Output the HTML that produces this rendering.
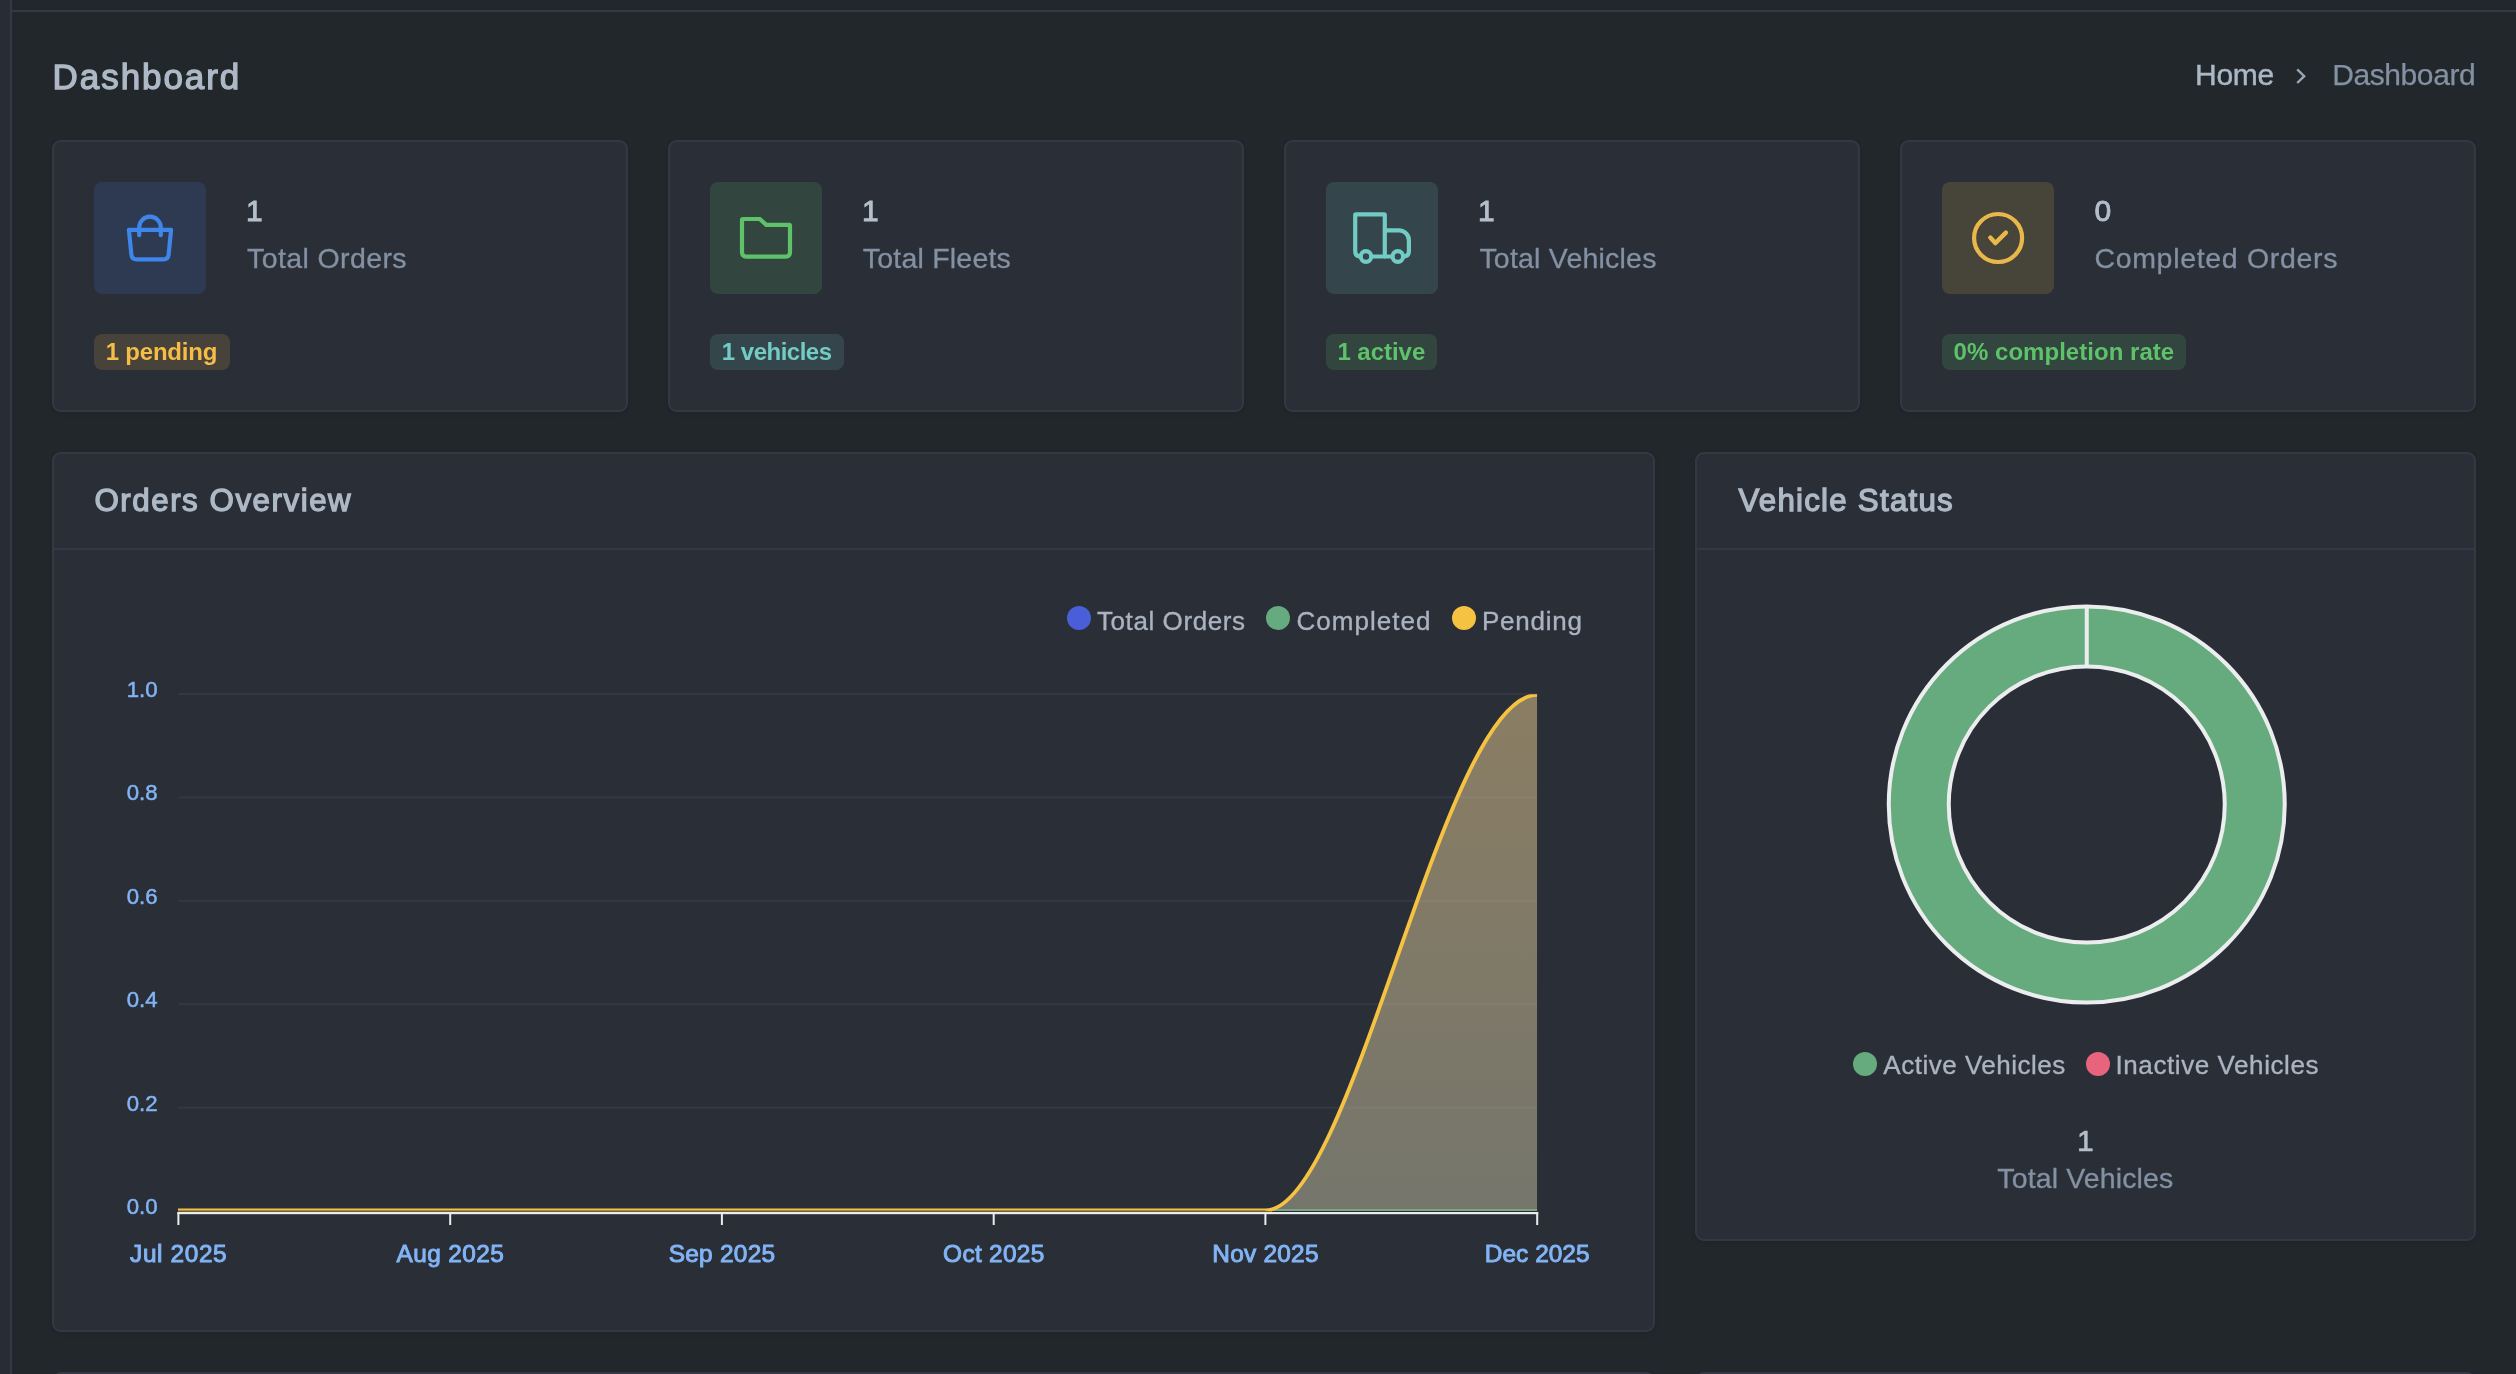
<!DOCTYPE html>
<html lang="en">
<head>
<meta charset="utf-8">
<title>Dashboard</title>
<style>
*{box-sizing:border-box;margin:0;padding:0}
html,body{width:2516px;height:1374px;overflow:hidden;background:#22272b}
body{position:relative;font-family:"Liberation Sans",sans-serif;color:#aab8c5;-webkit-font-smoothing:antialiased}
.abs{position:absolute}
.sidebar{left:0;top:0;width:12px;height:1374px;background:#282c35;border-right:2px solid #323946}
.topline{left:12px;top:10px;width:2504px;height:2px;background:#323946}
.card{position:absolute;background:#2a2e37;border:2px solid #323945;border-radius:9px;box-shadow:0 2px 5px rgba(0,0,0,.08)}
.title{left:53px;top:56.1px;font-size:35px;line-height:42px;font-weight:400;color:#aeb9c6;-webkit-text-stroke:1.3px #aeb9c6;white-space:nowrap}
.crumb{top:58px;font-size:30px;line-height:34px;white-space:nowrap}
.ibox{position:absolute;left:40px;top:40px;width:112px;height:112px;border-radius:8px}
.ibox svg{position:absolute;left:0;top:0;width:112px;height:112px;fill:none;stroke-width:4.2;stroke-linecap:round;stroke-linejoin:round}
.num{position:absolute;left:193px;top:50.7px;font-size:30px;line-height:36px;color:#b4bfcb;white-space:nowrap;-webkit-text-stroke:0.9px #b4bfcb}
.lbl{position:absolute;left:193px;top:99px;font-size:28.5px;line-height:34px;color:#8391a2;white-space:nowrap;-webkit-text-stroke:0.3px #8391a2}
.badge{position:absolute;left:40px;top:192px;height:36px;border-radius:8px;font-size:24px;line-height:36px;font-weight:700;text-align:left;white-space:nowrap}
.badge span{display:inline-block}
.chead{position:absolute;left:0;top:0;right:0;height:96px;border-bottom:2px solid #323945}
.chead span{position:absolute;left:40px;display:inline-block;top:26.5px;font-size:31.3px;line-height:40px;font-weight:400;color:#aeb9c6;-webkit-text-stroke:1.3px #aeb9c6;white-space:nowrap}
svg text{font-family:"Liberation Sans",sans-serif}
/*FIT*/
#t-title{letter-spacing:1.93px;margin-left:-0.40px}
#t-home{letter-spacing:-0.24px;margin-left:-1.00px}
#t-crumb{letter-spacing:-0.41px;margin-left:-1.80px}
#t-num1{letter-spacing:0.00px;margin-left:-1.00px}
#t-num2{letter-spacing:0.00px;margin-left:-1.00px}
#t-num3{letter-spacing:0.00px;margin-left:-1.00px}
#t-num4{letter-spacing:0.00px;margin-left:-0.60px}
#t-lbl1{letter-spacing:0.39px;margin-left:0.00px}
#t-lbl2{letter-spacing:0.21px;margin-left:-0.20px}
#t-lbl3{letter-spacing:0.21px;margin-left:0.40px}
#t-lbl4{letter-spacing:0.68px;margin-left:-0.60px}
#t-badge1{letter-spacing:-0.23px;margin-left:11.80px}
#t-badge2{letter-spacing:-0.50px;margin-left:11.80px}
#t-badge3{letter-spacing:-0.03px;margin-left:11.40px}
#t-badge4{letter-spacing:0.03px;margin-left:11.60px}
#t-oo{letter-spacing:1.54px;margin-left:0.40px}
#t-vs{letter-spacing:1.23px;margin-left:1.40px}
/*ENDFIT*/
</style>
</head>
<body>
<div id="wrap" style="position:absolute;left:0;top:0;width:2516px;height:1374px;will-change:transform">
<div class="abs sidebar"></div>
<div class="abs topline"></div>

<div class="abs title" id="t-title">Dashboard</div>
<div class="abs crumb" id="t-home" style="left:2196px;color:#aab8c5;-webkit-text-stroke:0.45px #aab8c5">Home</div>
<svg class="abs" style="left:2292px;top:66px" width="20" height="20" viewBox="0 0 20 20" fill="none" stroke="#9aa6b4" stroke-width="2.4" stroke-linecap="butt" stroke-linejoin="miter"><path d="M5.2 3.4 L12.2 10.2 L5.2 17"/></svg>
<div class="abs crumb" id="t-crumb" style="left:2334px;color:#8391a2;-webkit-text-stroke:0.25px #8391a2">Dashboard</div>

<!-- stat cards -->
<div class="card" style="left:52px;top:140px;width:576px;height:272px">
  <div class="ibox" style="background:#2d3a52"><svg viewBox="0 0 112 112" stroke="#3f86ea"><path d="M34.9 47.9H77.1L74.6 72.6Q74.1 77.3 69.4 77.3H42.6Q37.9 77.3 37.4 72.6Z"/><path d="M45.2 53.2V45.5A10.8 10.8 0 0 1 66.8 45.5V53.2"/></svg></div>
  <div class="num" id="t-num1">1</div><div class="lbl" id="t-lbl1">Total Orders</div>
  <div class="badge" style="width:136px;background:#48433a;color:#f5bd47"><span id="t-badge1">1 pending</span></div>
</div>
<div class="card" style="left:668px;top:140px;width:576px;height:272px">
  <div class="ibox" style="background:#32453e"><svg viewBox="0 0 112 112" stroke="#5ec26a"><path stroke-linejoin="miter" d="M33 37H49.8L56.2 42.8H79.2Q80 42.8 80 43.6V69.9Q80 74.7 75.2 74.7H36.8Q32 74.7 32 69.9V38Q32 37 33 37Z"/></svg></div>
  <div class="num" id="t-num2">1</div><div class="lbl" id="t-lbl2">Total Fleets</div>
  <div class="badge" style="width:134px;background:#34464b;color:#72cbc4"><span id="t-badge2">1 vehicles</span></div>
</div>
<div class="card" style="left:1284px;top:140px;width:576px;height:272px">
  <div class="ibox" style="background:#34464b"><svg viewBox="0 0 112 112" stroke="#72cbc4"><path d="M34.6 74.5Q29.2 74.5 29.2 69V33Q29.2 32.3 29.9 32.3H58.1Q58.8 32.3 58.8 33V74.5"/><path d="M45.3 74.5H66.5"/><path d="M58.8 48.4H72.9A10 10 0 0 1 82.9 58.4V69Q82.9 74.5 77.1 74.5"/><circle cx="39.95" cy="74.5" r="5.3"/><circle cx="71.8" cy="74.5" r="5.3"/></svg></div>
  <div class="num" id="t-num3">1</div><div class="lbl" id="t-lbl3">Total Vehicles</div>
  <div class="badge" style="width:111px;background:#32453e;color:#5ec26a"><span id="t-badge3">1 active</span></div>
</div>
<div class="card" style="left:1900px;top:140px;width:576px;height:272px">
  <div class="ibox" style="background:#47443a"><svg viewBox="0 0 112 112" stroke="#eab84a"><circle cx="56.1" cy="56" r="24"/><path d="M48.3 55.6L53.3 61.1L63.9 50.6" stroke-width="4.4"/></svg></div>
  <div class="num" id="t-num4">0</div><div class="lbl" id="t-lbl4">Completed Orders</div>
  <div class="badge" style="width:244px;background:#32453e;color:#5ec26a"><span id="t-badge4">0% completion rate</span></div>
</div>

<!-- orders overview -->
<div class="card" style="left:52px;top:452px;width:1603px;height:880px">
  <div class="chead"><span id="t-oo">Orders Overview</span></div>
</div>

<!-- vehicle status -->
<div class="card" style="left:1695px;top:452px;width:781px;height:789px">
  <div class="chead"><span id="t-vs">Vehicle Status</span></div>
</div>

<svg class="abs" style="left:52px;top:452px" width="1603" height="880" viewBox="52 452 1603 880">
<defs><linearGradient id="ag" x1="0" y1="693" x2="0" y2="1211" gradientUnits="userSpaceOnUse"><stop offset="0" stop-color="#ebcd8f" stop-opacity="0.5"/><stop offset="1" stop-color="#c1bda1" stop-opacity="0.5"/></linearGradient>
<clipPath id="gc"><rect x="170" y="690" width="1367.2" height="522"/></clipPath><clipPath id="lc"><polygon points="170,694.3 1537.2,694.3 1537.2,1213 1284,1213 1264,1210.4 170,1210.4"/></clipPath></defs>
<circle cx="1079" cy="618" r="12" fill="#4a5fd7"/>
<text x="1097" y="630" font-size="26" fill="#aab4c0" stroke="#aab4c0" stroke-width="0.35" textLength="148" lengthAdjust="spacing">Total Orders</text>
<circle cx="1278" cy="618" r="12" fill="#66ab7f"/>
<text x="1296.5" y="630" font-size="26" fill="#aab4c0" stroke="#aab4c0" stroke-width="0.35" textLength="134" lengthAdjust="spacing">Completed</text>
<circle cx="1464" cy="618" r="12" fill="#f5c242"/>
<text x="1482" y="630" font-size="26" fill="#aab4c0" stroke="#aab4c0" stroke-width="0.35" textLength="100" lengthAdjust="spacing">Pending</text>
<rect x="178.5" y="692.9" width="1358.7" height="2" fill="#333944"/>
<rect x="178.5" y="796.4" width="1358.7" height="2" fill="#333944"/>
<rect x="178.5" y="899.8" width="1358.7" height="2" fill="#333944"/>
<rect x="178.5" y="1003.2" width="1358.7" height="2" fill="#333944"/>
<rect x="178.5" y="1106.7" width="1358.7" height="2" fill="#333944"/>
<text x="157.6" y="696.7" font-size="22.2" fill="#82b4f5" stroke="#82b4f5" stroke-width="0.5" text-anchor="end">1.0</text>
<text x="157.6" y="800.2" font-size="22.2" fill="#82b4f5" stroke="#82b4f5" stroke-width="0.5" text-anchor="end">0.8</text>
<text x="157.6" y="903.6" font-size="22.2" fill="#82b4f5" stroke="#82b4f5" stroke-width="0.5" text-anchor="end">0.6</text>
<text x="157.6" y="1007.1" font-size="22.2" fill="#82b4f5" stroke="#82b4f5" stroke-width="0.5" text-anchor="end">0.4</text>
<text x="157.6" y="1110.5" font-size="22.2" fill="#82b4f5" stroke="#82b4f5" stroke-width="0.5" text-anchor="end">0.2</text>
<text x="157.6" y="1214.0" font-size="22.2" fill="#82b4f5" stroke="#82b4f5" stroke-width="0.5" text-anchor="end">0.0</text>
<g clip-path="url(#gc)">
<path d="M1265.4 1211C1353 1211 1443 694.4 1537.2 694.4V1211Z" fill="url(#ag)"/>
<path d="M1265.4 1210H1537.2" stroke="#7db98b" stroke-width="1.6" fill="none"/>
<rect x="178" y="1210.3" width="1094" height="1.8" fill="#6e5f3c"/><path clip-path="url(#lc)" d="M178 1210.5H1265.4C1353 1210.5 1443 694.9 1537.2 694.9H1545" stroke="#f5c242" stroke-width="3.8" fill="none"/>
</g>
<rect x="177.4" y="1212" width="1360.8" height="2.2" fill="#ececec"/>
<rect x="177.4" y="1212" width="2" height="13" fill="#ececec"/>
<rect x="449.2" y="1212" width="2" height="13" fill="#ececec"/>
<rect x="720.9" y="1212" width="2" height="13" fill="#ececec"/>
<rect x="992.7" y="1212" width="2" height="13" fill="#ececec"/>
<rect x="1264.4" y="1212" width="2" height="13" fill="#ececec"/>
<rect x="1536.2" y="1212" width="2" height="13" fill="#ececec"/>
<text x="178.4" y="1262.3" font-size="24.4" fill="#82b4f5" stroke="#82b4f5" stroke-width="0.95" text-anchor="middle" textLength="96.6" lengthAdjust="spacing">Jul 2025</text>
<text x="450.2" y="1262.3" font-size="24.4" fill="#82b4f5" stroke="#82b4f5" stroke-width="0.95" text-anchor="middle" textLength="107.5" lengthAdjust="spacing">Aug 2025</text>
<text x="721.9" y="1262.3" font-size="24.4" fill="#82b4f5" stroke="#82b4f5" stroke-width="0.95" text-anchor="middle" textLength="106.4" lengthAdjust="spacing">Sep 2025</text>
<text x="993.7" y="1262.3" font-size="24.4" fill="#82b4f5" stroke="#82b4f5" stroke-width="0.95" text-anchor="middle" textLength="101.2" lengthAdjust="spacing">Oct 2025</text>
<text x="1265.4" y="1262.3" font-size="24.4" fill="#82b4f5" stroke="#82b4f5" stroke-width="0.95" text-anchor="middle" textLength="106.2" lengthAdjust="spacing">Nov 2025</text>
<text x="1537.2" y="1262.3" font-size="24.4" fill="#82b4f5" stroke="#82b4f5" stroke-width="0.95" text-anchor="middle" textLength="104.7" lengthAdjust="spacing">Dec 2025</text>
</svg>
<svg class="abs" style="left:1695px;top:452px" width="781" height="788" viewBox="1695 452 781 788">
<circle cx="2086.75" cy="804.5" r="168" fill="none" stroke="#66ab7e" stroke-width="60"/>
<circle cx="2086.75" cy="804.5" r="198" fill="none" stroke="#ecedef" stroke-width="4"/>
<circle cx="2086.75" cy="804.5" r="138" fill="none" stroke="#ecedef" stroke-width="4"/>
<rect x="2084.75" y="605" width="4" height="62" fill="#ecedef"/>
<circle cx="1865" cy="1064" r="12" fill="#66ab7e"/>
<text x="1883.3" y="1074" font-size="26" fill="#aab4c0" stroke="#aab4c0" stroke-width="0.35" textLength="182" lengthAdjust="spacing">Active Vehicles</text>
<circle cx="2098" cy="1064" r="12" fill="#e8647c"/>
<text x="2115.5" y="1074" font-size="26" fill="#aab4c0" stroke="#aab4c0" stroke-width="0.35" textLength="203" lengthAdjust="spacing">Inactive Vehicles</text>
<text x="2085.3" y="1151" font-size="30" fill="#b4bfcb" stroke="#b4bfcb" stroke-width="0.6" text-anchor="middle">1</text>
<text x="2085.3" y="1187.6" font-size="28.5" fill="#8391a2" stroke="#8391a2" stroke-width="0.3" text-anchor="middle" textLength="176" lengthAdjust="spacing">Total Vehicles</text>
</svg>
<!-- next row card (peeking) -->
<div class="card" style="left:52px;top:1372px;width:1603px;height:200px"></div>
<div class="card" style="left:1695px;top:1372px;width:781px;height:200px"></div>
</div>
</body>
</html>
